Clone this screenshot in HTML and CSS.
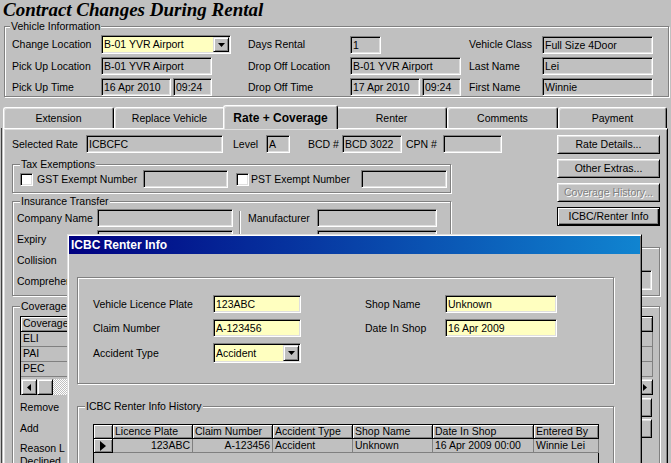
FILE: index.html
```html
<!DOCTYPE html>
<html>
<head>
<meta charset="utf-8">
<title>Contract Changes During Rental</title>
<link rel="stylesheet" href="styles.css">
</head>
<body>
<h1 class="title">Contract Changes During Rental</h1>

<div class="group vinfo">
  <span class="legend">Vehicle Information</span>
  <div class="vgrid">
    <span class="lbl">Change Location</span>
    <div class="field yellow combo w130"><span class="ctext">B-01 YVR Airport</span><span class="ddb"><svg width="7" height="4" viewBox="0 0 7 4"><path d="M0 0H7L3.5 4Z"/></svg></span></div>
    <span class="lbl">Days Rental</span>
    <div class="field w31">1</div>
    <span class="lbl">Vehicle Class</span>
    <div class="field w111">Full Size 4Door</div>

    <span class="lbl">Pick Up Location</span>
    <div class="field w111">B-01 YVR Airport</div>
    <span class="lbl">Drop Off Location</span>
    <div class="field w111">B-01 YVR Airport</div>
    <span class="lbl">Last Name</span>
    <div class="field w111">Lei</div>

    <span class="lbl">Pick Up Time</span>
    <div class="pair"><div class="field w70">16 Apr 2010</div><div class="field w39">09:24</div></div>
    <span class="lbl">Drop Off Time</span>
    <div class="pair"><div class="field w70">17 Apr 2010</div><div class="field w39">09:24</div></div>
    <span class="lbl">First Name</span>
    <div class="field w111">Winnie</div>
  </div>
</div>

<div class="tabs">
  <div class="tab">Extension</div>
  <div class="tab">Replace Vehicle</div>
  <div class="tab active">Rate + Coverage</div>
  <div class="tab">Renter</div>
  <div class="tab">Comments</div>
  <div class="tab last">Payment</div>
</div>

<div class="panel">
  <div class="pgrid">
    <div class="raterow">
      <span class="lbl l-rate">Selected Rate</span><div class="field w137">ICBCFC</div>
      <span class="lbl l-level">Level</span><div class="field w24">A</div>
      <span class="lbl l-bcd">BCD #</span><div class="field w60">BCD 3022</div>
      <span class="lbl l-cpn">CPN #</span><div class="field w59"></div>
    </div>

    <div class="btncol">
      <div class="btn">Rate Details...</div>
      <div class="btn">Other Extras...</div>
      <div class="btn disabled">Coverage History...</div>
      <div class="btn default">ICBC/Renter Info</div>
    </div>

    <div class="group tax">
      <span class="legend">Tax Exemptions</span>
      <div class="taxrow">
        <span class="chk"></span><span class="lbl l-gst">GST Exempt Number</span><div class="field w85"></div>
        <span class="chk chk2"></span><span class="lbl l-pst">PST Exempt Number</span><div class="field w86"></div>
      </div>
    </div>

    <div class="group ins">
      <span class="legend">Insurance Transfer</span>
      <div class="igrid">
        <span class="lbl">Company Name</span><div class="field"></div>
        <div class="sep"></div>
        <span class="lbl">Manufacturer</span><div class="field"></div>

        <span class="lbl">Expiry</span><div class="field"></div>
        <span class="lbl c4">Model</span><div class="field"></div>

        <span class="lbl">Collision</span><div class="field"></div>
        <span class="lbl c4"></span><div class="field"></div>

        <span class="lbl">Comprehensive</span><div class="field"></div>
        <span class="lbl c4"></span><div class="field"></div>
      </div>
    </div>

    <div class="group rgrp">
      <div class="field w100"></div>
    </div>

    <div class="group cov">
      <span class="legend">Coverage</span>
      <div class="ctable">
        <div class="hc">Coverage</div><div class="hc"></div><div class="hc">Included</div>
        <div class="dc">ELI</div><div class="dc"></div><div class="dc"></div>
        <div class="dc">PAI</div><div class="dc"></div><div class="dc"></div>
        <div class="dc">PEC</div><div class="dc"></div><div class="dc"></div>
        <div class="cgap"></div>
        <div class="sbar">
          <span class="sbtn"><svg width="4" height="7" viewBox="0 0 4 7"><path d="M4 0V7L0 3.5Z"/></svg></span>
          <span class="sbtn thumb"></span>
          <span class="track"></span>
          <span class="sbtn"><svg width="4" height="7" viewBox="0 0 4 7"><path d="M0 0V7L4 3.5Z"/></svg></span>
        </div>
      </div>
      <div class="crows">
        <span class="lbl">Remove</span><div class="btn"></div>
        <span class="lbl">Add</span><div class="btn"></div>
      </div>
      <div class="reason">Reason L&nbsp; <br>Declined</div>
    </div>
  </div>
</div>

<div class="dialog">
  <div class="titlebar">ICBC Renter Info</div>
  <div class="dbody">
    <div class="group dgroup">
      <div class="dgrid">
        <span class="lbl">Vehicle Licence Plate</span>
        <div class="field yellow">123ABC</div>
        <span></span>
        <span class="lbl">Shop Name</span>
        <div class="field yellow">Unknown</div>

        <span class="lbl">Claim Number</span>
        <div class="field yellow">A-123456</div>
        <span></span>
        <span class="lbl">Date In Shop</span>
        <div class="field yellow">16 Apr 2009</div>

        <span class="lbl">Accident Type</span>
        <div class="field yellow combo tall"><span class="ctext">Accident</span><span class="ddb"><svg width="7" height="4" viewBox="0 0 7 4"><path d="M0 0H7L3.5 4Z"/></svg></span></div>
      </div>
    </div>

    <div class="group hgroup">
      <span class="legend">ICBC Renter Info History</span>
      <div class="htable">
        <div class="hc"></div>
        <div class="hc">Licence Plate</div>
        <div class="hc">Claim Number</div>
        <div class="hc">Accident Type</div>
        <div class="hc">Shop Name</div>
        <div class="hc">Date In Shop</div>
        <div class="hc">Entered By</div>

        <div class="hc ind"><svg width="6" height="10" viewBox="0 0 6 10"><path d="M0 0L6 5L0 10Z"/></svg></div>
        <div class="dc r">123ABC</div>
        <div class="dc r">A-123456</div>
        <div class="dc">Accident</div>
        <div class="dc">Unknown</div>
        <div class="dc">16 Apr 2009 00:00</div>
        <div class="dc">Winnie Lei</div>
      </div>
    </div>
  </div>
</div>
</body>
</html>
```

FILE: styles.css
```css
* { box-sizing: border-box; }
html, body { margin: 0; padding: 0; }
body {
  position: relative;
  width: 671px;
  height: 463px;
  overflow: hidden;
  background: #c0c0c0;
  color: #000;
  font-family: "Liberation Sans", Arial, sans-serif;
  font-size: 10.5px;
  line-height: 13px;
}

.title {
  margin: 0;
  height: 26px;
  padding-left: 3px;
  font-family: "Liberation Serif", "Times New Roman", serif;
  font-size: 19px;
  font-style: italic;
  font-weight: bold;
  line-height: 19px;
}

/* etched group box */
.group {
  position: relative;
  border: 1px solid #808080;
  box-shadow: inset 1px 1px 0 #fff, 1px 1px 0 #fff;
}
.legend {
  position: absolute;
  top: -7px;
  left: 7px;
  padding: 0 1px;
  background: #c0c0c0;
  line-height: 12px;
  white-space: nowrap;
}

.lbl { white-space: nowrap; }

/* sunken edit field */
.field {
  height: 18px;
  border: 1px solid;
  border-color: #808080 #fff #fff #808080;
  box-shadow: inset 1px 1px 0 #000, inset -1px -1px 0 #dfdfdf;
  background: #c0c0c0;
  padding: 0 2px;
  line-height: 16px;
  white-space: nowrap;
  overflow: hidden;
}
.field.yellow { background: #ffffc0; }
.combo {
  display: flex;
  align-items: stretch;
  height: 19px;
  padding: 1px 1px 1px 2px;
  line-height: 15px;
}
.combo.tall { height: 20px; line-height: 16px; }
.combo .ctext { flex: 1; }
.ddb {
  width: 16px;
  display: flex;
  align-items: center;
  justify-content: center;
  border: 1px solid;
  border-color: #dfdfdf #000 #000 #dfdfdf;
  box-shadow: inset 1px 1px 0 #fff, inset -1px -1px 0 #808080;
  background: #c0c0c0;
}
.ddb svg { display: block; }

.w24 { width: 24px; }
.w31 { width: 31px; }
.w39 { width: 39px; }
.w59 { width: 59px; }
.w60 { width: 60px; }
.w70 { width: 70px; }
.w85 { width: 85px; }
.w86 { width: 86px; }
.w100 { width: 100px; height: 20px; }
.w111 { width: 111px; }
.w130 { width: 130px; }
.w137 { width: 137px; }

/* vehicle information */
.vinfo {
  margin-left: 4px;
  width: 665px;
  height: 71px;
}
.vinfo .legend { left: 5px; }
.vgrid {
  display: grid;
  grid-template-columns: 89px 147px 102px 119px 73px 111px;
  grid-template-rows: 19px 18px 18px;
  row-gap: 3px;
  align-items: center;
  padding: 8px 0 0 7px;
}
.pair { display: flex; gap: 2px; }

/* tabs */
.tabs {
  position: relative;
  z-index: 1;
  display: flex;
  align-items: flex-end;
  height: 23px;
  margin-top: 8px;
  padding-left: 3px;
}
.tab {
  width: 111px;
  height: 21px;
  border: 1px solid #fff;
  border-right-color: #000;
  border-bottom: 0;
  border-radius: 3px 3px 0 0;
  box-shadow: inset 1px 1px 0 #dfdfdf, inset -1px 0 0 #808080;
  background: #c0c0c0;
  text-align: center;
  line-height: 20px;
}
.tab.last { width: 109px; }
.tab.active {
  position: relative;
  z-index: 2;
  width: 115px;
  height: 24px;
  margin: 0 -2px -1px;
  padding-top: 1px;
  font-size: 12px;
  font-weight: bold;
  line-height: 22px;
}

.panel {
  margin-left: 3px;
  width: 665px;
  height: 340px;
  border: 1px solid;
  border-color: #fff #000 #000 #fff;
  box-shadow: inset 1px 1px 0 #dfdfdf, inset -1px -1px 0 #808080, -1px 0 0 #c0c0c0, -2px 0 0 #404040;
  padding: 6px 0 0 8px;
}
.pgrid {
  display: grid;
  grid-template-columns: 439px 7px 99px 103px;
  grid-template-rows: 18px 11px 29px 8px 46px 49px 10px auto;
}
.raterow {
  grid-column: 1 / 4;
  grid-row: 1;
  display: flex;
  align-items: center;
}
.l-rate { width: 74px; }
.l-level { width: 33px; margin-left: 10px; }
.l-bcd { width: 34px; margin-left: 18px; }
.l-cpn { width: 37px; margin-left: 4px; }

.btncol {
  grid-column: 4;
  grid-row: 1 / 6;
  display: flex;
  flex-direction: column;
  gap: 5px;
}
.btn {
  height: 19px;
  border: 1px solid;
  border-color: #fff #000 #000 #fff;
  box-shadow: inset 1px 1px 0 #dfdfdf, inset -1px -1px 0 #808080;
  background: #c0c0c0;
  text-align: center;
  line-height: 17px;
  white-space: nowrap;
}
.btn.disabled {
  color: #808080;
  text-shadow: 1px 1px 0 #fff;
}
.btn.default {
  border-color: #000;
  box-shadow: inset 1px 1px 0 #fff, inset -1px -1px 0 #000, inset -2px -2px 0 #808080;
}

.tax { grid-column: 1; grid-row: 3; }
.taxrow {
  display: flex;
  align-items: center;
  height: 100%;
  padding: 1px 0 0 7px;
}
.chk {
  width: 13px;
  height: 13px;
  background: #fff;
  border: 1px solid;
  border-color: #808080 #fff #fff #808080;
  box-shadow: inset 1px 1px 0 #000, inset -1px -1px 0 #dfdfdf;
}
.chk2 { margin-left: 8px; }
.l-gst { width: 106px; margin-left: 4px; }
.l-pst { width: 110px; margin-left: 2px; }

.ins { grid-column: 1; grid-row: 5 / 7; }
.igrid {
  display: grid;
  grid-template-columns: 80px 136px 15px 69px 120px;
  grid-auto-rows: 18px;
  row-gap: 3px;
  align-items: center;
  padding: 7px 0 0 4px;
}
.igrid .c4 { grid-column: 4; }
.sep {
  grid-column: 3;
  grid-row: 1 / 5;
  align-self: stretch;
  width: 2px;
  margin: 2px 0 0 6px;
  border-left: 1px solid #808080;
  border-right: 1px solid #fff;
}

.rgrp {
  grid-column: 3 / 5;
  grid-row: 6;
  display: flex;
  justify-content: flex-end;
  align-items: flex-end;
  padding: 0 7px 5px 0;
}

.cov {
  grid-column: 1 / 5;
  grid-row: 8;
  height: 170px;
  padding: 9px 6px 0 7px;
}
.ctable {
  height: 79px;
  border-left: 1px solid #000;
  border-top: 1px solid #000;
  display: grid;
  grid-template-columns: 110px 1fr 80px;
  grid-template-rows: 15px 15px 15px 15px 1fr 16px;
}
.hc {
  background: #c0c0c0;
  border-right: 1px solid #000;
  border-bottom: 1px solid #000;
  box-shadow: inset 1px 1px 0 #fff, inset -1px -1px 0 #808080;
  padding: 0 2px;
  line-height: 13px;
  white-space: nowrap;
  overflow: hidden;
}
.dc {
  border-right: 1px solid #808080;
  border-bottom: 1px solid #808080;
  padding: 0 2px;
  line-height: 13px;
  white-space: nowrap;
  overflow: hidden;
}
.dc.r { text-align: right; }
.cgap { grid-column: 1 / -1; }
.sbar { grid-column: 1 / -1; display: flex; }
.sbtn {
  width: 16px;
  height: 16px;
  display: flex;
  align-items: center;
  justify-content: center;
  border: 1px solid;
  border-color: #dfdfdf #000 #000 #dfdfdf;
  box-shadow: inset 1px 1px 0 #fff, inset -1px -1px 0 #808080;
  background: #c0c0c0;
}
.track {
  flex: 1;
  background: repeating-conic-gradient(#fff 0 25%, #c0c0c0 0 50%) 0 0 / 2px 2px;
}
.crows {
  display: grid;
  grid-template-columns: 1fr 60px;
  grid-template-rows: 19px 19px;
  row-gap: 2px;
  align-items: center;
  margin-top: 3px;
  padding-right: 1px;
}
.reason {
  margin-top: 4px;
  line-height: 13px;
  white-space: nowrap;
}

/* dialog window */
.dialog {
  position: absolute;
  left: 67px;
  top: 234px;
  width: 575px;
  height: 229px;
  border: 1px solid;
  border-bottom: 0;
  border-color: #dfdfdf #000 #000 #dfdfdf;
  box-shadow: inset 1px 1px 0 #fff, inset -1px 0 0 #808080;
  padding: 1px;
  background: #c0c0c0;
  overflow: hidden;
}
.titlebar {
  height: 18px;
  padding-left: 2px;
  background: linear-gradient(to right, #000080, #1084d0);
  color: #fff;
  font-size: 12px;
  font-weight: bold;
  line-height: 18px;
  white-space: nowrap;
}
.dbody { padding: 23px 0 0 8px; }
.dgroup { width: 537px; height: 107px; }
.dgrid {
  display: grid;
  grid-template-columns: 120px 88px 64px 80px 112px;
  grid-template-rows: 18px 18px 20px;
  row-gap: 6px;
  align-items: center;
  padding: 17px 0 0 15px;
}
.hgroup {
  width: 537px;
  height: 80px;
  margin-top: 22px;
}
.htable {
  margin: 17px 0 0 15px;
  width: 506px;
  height: 60px;
  border-left: 1px solid #000;
  border-top: 1px solid #000;
  box-shadow: inset -1px 0 0 #000;
  display: grid;
  grid-template-columns: 19px 80px 80px 80px 80px 101px 65px;
  grid-template-rows: 14px 14px;
  align-content: start;
}
.htable .hc { line-height: 12px; }
.htable .dc { line-height: 13px; }
.ind {
  display: flex;
  align-items: center;
  justify-content: center;
}
.ind svg { display: block; }
```
